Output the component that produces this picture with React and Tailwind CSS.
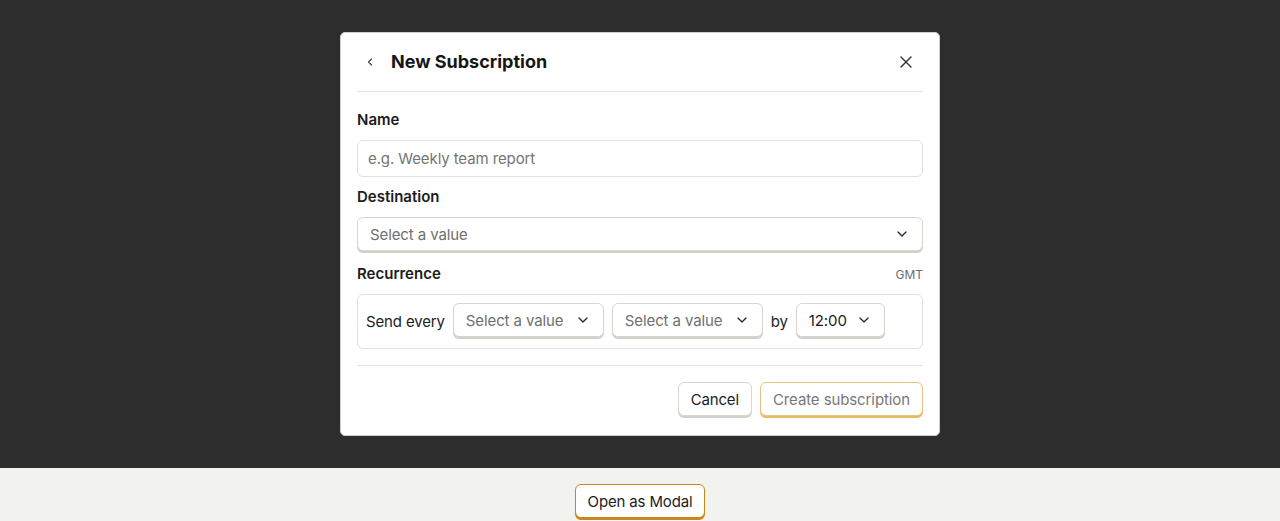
import { ChevronDown, ChevronLeft, X } from 'lucide-react';

function SelectBox({ label, placeholder = true, className = '' }) {
    return (
        <button
            className={`flex items-center justify-between h-[34px] px-3 pt-[2px] bg-white border border-[#d9d6cf] rounded-md shadow-[0_2px_0_#d3d0c9] text-[15px] tracking-[-0.1px] ${placeholder ? 'text-[#6f6f6f]' : 'text-[#1c1c1c]'} ${className}`}
        >
            <span>{label}</span>
            <ChevronDown className="w-4 h-4 -mt-[2px] text-[#2a2a2a]" strokeWidth={2} />
        </button>
    );
}

export default function App() {
    return (
        <div className="min-h-screen bg-[#f2f2ee] font-['Inter',sans-serif] text-[#1c1c1c]">
            {/* Overlay */}
            <div className="h-[468px] bg-[#2d2d2d] flex justify-center pt-8">
                <div className="w-[600px] h-[404px] bg-white rounded-[5px] border border-[#cfcfcf] px-4">
                    {/* Header */}
                    <div className="flex items-center h-[59px] border-b border-[#e2e0da]">
                        <ChevronLeft className="w-3 h-3 ml-[7px] text-[#444]" strokeWidth={2.5} />
                        <h2 className="ml-[15px] text-lg font-bold text-[#161616]">New Subscription</h2>
                        <X className="ml-auto mr-[7px] w-5 h-5 text-[#333]" strokeWidth={1.6} />
                    </div>

                    {/* Name */}
                    <label className="block mt-[18px] text-[15px] font-semibold leading-[20px]">Name</label>
                    <input
                        className="mt-[10px] w-full h-[37px] px-[10px] border border-[#e2e0da] rounded-md text-[15px] tracking-[-0.1px] placeholder:text-[#757575] outline-none"
                        placeholder="e.g. Weekly team report"
                    />

                    {/* Destination */}
                    <label className="block mt-[10px] text-[15px] font-semibold leading-[20px]">Destination</label>
                    <SelectBox label="Select a value" className="mt-[10px] w-full" />

                    {/* Recurrence */}
                    <div className="flex items-end justify-between mt-[13px]">
                        <span className="text-[15px] font-semibold leading-[20px]">Recurrence</span>
                        <span className="text-xs text-[#6b6b6b] leading-[18px]">GMT</span>
                    </div>
                    <div className="mt-[10px] h-[55px] border border-[#e2e0da] rounded-md flex items-center px-2 gap-2 text-[15px] tracking-[-0.15px]">
                        <span className="pt-[2px]">Send every</span>
                        <SelectBox label="Select a value" className="w-[151px] mb-[3px]" />
                        <SelectBox label="Select a value" className="w-[151px] mb-[3px]" />
                        <span className="pt-[2px]">by</span>
                        <SelectBox label="12:00" placeholder={false} className="w-[89px] mb-[3px]" />
                    </div>

                    {/* Footer */}
                    <div className="mt-4 border-t border-[#e2e0da] pt-4 flex justify-end gap-2">
                        <button className="h-[34px] px-3 pt-[2px] bg-white border border-[#d9d6cf] rounded-md shadow-[0_2px_0_#d3d0c9] text-[15px] tracking-[-0.15px] text-[#1c1c1c]">
                            Cancel
                        </button>
                        <button className="h-[34px] px-3 pt-[2px] bg-white border border-[#e8c27d] rounded-md shadow-[0_2px_0_#e8b865] text-[15px] tracking-[-0.1px] text-[#787878]">
                            Create subscription
                        </button>
                    </div>
                </div>
            </div>

            {/* Page */}
            <div className="flex justify-center pt-4">
                <button className="h-[34px] px-3 pt-[2px] bg-white border border-[#c8861c] rounded-md shadow-[0_2px_0_#c8861c] text-[15px] tracking-[-0.15px] text-[#1c1c1c]">
                    Open as Modal
                </button>
            </div>
        </div>
    );
}
